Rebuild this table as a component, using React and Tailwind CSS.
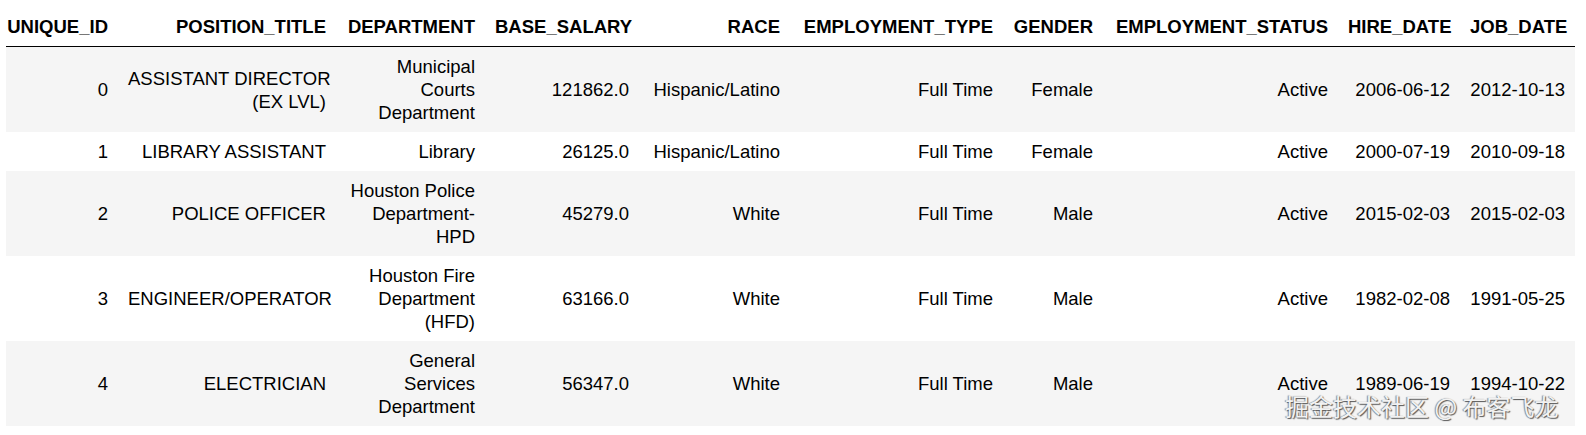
import React from 'react'

const columns = [
    { key: "id", label: "UNIQUE_ID", width: "w-[112px]" },
    { key: "title", label: "POSITION_TITLE", width: "w-[218px]" },
    { key: "dept", label: "DEPARTMENT", width: "w-[149px]" },
    { key: "salary", label: "BASE_SALARY", width: "w-[154px]" },
    { key: "race", label: "RACE", width: "w-[151px]" },
    { key: "type", label: "EMPLOYMENT_TYPE", width: "w-[213px]" },
    { key: "gender", label: "GENDER", width: "w-[100px]" },
    { key: "status", label: "EMPLOYMENT_STATUS", width: "w-[235px]" },
    { key: "hire", label: "HIRE_DATE", width: "w-[122px]" },
    { key: "job", label: "JOB_DATE", width: "w-[115px]" },
];

// multi-line cells are arrays: one entry per rendered line
const rows = [
    {
        id: "0",
        title: ["ASSISTANT DIRECTOR", "(EX LVL)"],
        dept: ["Municipal", "Courts", "Department"],
        salary: "121862.0",
        race: "Hispanic/Latino",
        type: "Full Time",
        gender: "Female",
        status: "Active",
        hire: "2006-06-12",
        job: "2012-10-13",
    },
    {
        id: "1",
        title: "LIBRARY ASSISTANT",
        dept: "Library",
        salary: "26125.0",
        race: "Hispanic/Latino",
        type: "Full Time",
        gender: "Female",
        status: "Active",
        hire: "2000-07-19",
        job: "2010-09-18",
    },
    {
        id: "2",
        title: "POLICE OFFICER",
        dept: ["Houston Police", "Department-", "HPD"],
        salary: "45279.0",
        race: "White",
        type: "Full Time",
        gender: "Male",
        status: "Active",
        hire: "2015-02-03",
        job: "2015-02-03",
    },
    {
        id: "3",
        title: "ENGINEER/OPERATOR",
        dept: ["Houston Fire", "Department", "(HFD)"],
        salary: "63166.0",
        race: "White",
        type: "Full Time",
        gender: "Male",
        status: "Active",
        hire: "1982-02-08",
        job: "1991-05-25",
    },
    {
        id: "4",
        title: "ELECTRICIAN",
        dept: ["General", "Services", "Department"],
        salary: "56347.0",
        race: "White",
        type: "Full Time",
        gender: "Male",
        status: "Active",
        hire: "1989-06-19",
        job: "1994-10-22",
    },
];

const renderCell = (value) => {
    if (Array.isArray(value)) {
        return value.map((line, i) => (
            <React.Fragment key={i}>
                {i > 0 && <br />}
                {line}
            </React.Fragment>
        ));
    }
    return value;
};

export default function App() {
    return (
        <div
            className="relative w-[1586px] h-[435px] overflow-hidden bg-white text-black"
            style={{ fontFamily: '"Liberation Sans", Arial, sans-serif' }}
        >
            <table className="ml-[6px] mt-[7px] table-fixed border-collapse text-[18.5px] leading-[23px] w-[1569px]">
                <colgroup>
                    {columns.map((col) => (
                        <col key={col.key} className={col.width} />
                    ))}
                </colgroup>
                <thead>
                    <tr className="border-b border-black">
                        {columns.map((col, i) => (
                            <th
                                key={col.key}
                                className={`py-2 text-right font-bold whitespace-nowrap ${i === 0 ? "pl-[1px] pr-[10px]" : "px-[10px]"}`}
                            >
                                {col.label}
                            </th>
                        ))}
                    </tr>
                </thead>
                <tbody>
                    {rows.map((row, r) => (
                        <tr key={row.id} className={r % 2 === 0 ? "bg-[#f5f5f5]" : "bg-white"}>
                            {columns.map((col, i) => (
                                <td
                                    key={col.key}
                                    className={`py-2 text-right align-middle whitespace-nowrap ${i === 0 ? "pl-[1px] pr-[10px]" : "px-[10px]"}`}
                                >
                                    {renderCell(row[col.key])}
                                </td>
                            ))}
                        </tr>
                    ))}
                </tbody>
            </table>

            <div
                className="absolute left-[1285px] top-[392px] text-[24px] leading-[28px] whitespace-nowrap text-[#f2f2f2] [text-shadow:1px_1px_1px_#555,-1px_0_1px_#888]"
                style={{ fontFamily: '"Noto Sans CJK SC", "Liberation Sans", sans-serif' }}
            >
                掘金技术社区 @ 布客飞龙
            </div>
        </div>
    )
}
